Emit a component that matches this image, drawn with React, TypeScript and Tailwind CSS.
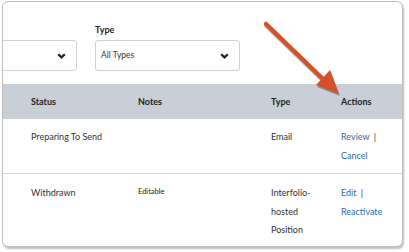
import React from 'react';

const Chevron: React.FC = () => (
    <svg width="9" height="6" viewBox="0 0 9 6" className="shrink-0">
        <path d="M1.2 1.2 L4.5 4.4 L7.8 1.2" fill="none" stroke="#222" strokeWidth="2.2" />
    </svg>
);

const Link: React.FC<{ children: React.ReactNode }> = ({ children }) => (
    <span className="text-[#2b6ca3]">{children}</span>
);

const App: React.FC = () => {
    return (
        <div className="w-[409px] h-[252px] bg-white overflow-hidden" style={{ fontFamily: 'Lato, "Open Sans", sans-serif' }}>
            <div className="relative ml-[2px] mt-[1px] w-[401px] h-[246px] rounded-[6px] border border-[#bdbdbd] bg-white overflow-hidden shadow-[1px_2px_2px_rgba(0,0,0,0.25)] text-[9px] text-[#333]">
                {/* Filters */}
                <div className="flex items-end gap-[18px] pt-[20px] h-[82px]">
                    <div className="ml-[-40px] w-[114px] h-[31px] mb-[13px] border border-[#d0d0d0] rounded-[3px] flex items-center justify-end pr-[10px]">
                        <Chevron />
                    </div>
                    <div className="flex flex-col mb-[13px]">
                        <label className="font-bold text-[#222] leading-[14px] mb-[3px]">Type</label>
                        <div className="w-[145px] h-[31px] border border-[#d0d0d0] rounded-[3px] flex items-center justify-between pl-[5px] pr-[10px]">
                            <span className="text-[8.5px]">All Types</span>
                            <Chevron />
                        </div>
                    </div>
                </div>

                {/* Header */}
                <div className="grid grid-cols-[107px_133px_70px_1fr] pl-[28px] h-[35px] items-center bg-[#c9cfd7] font-bold text-[#222]">
                    <div>Status</div>
                    <div>Notes</div>
                    <div>Type</div>
                    <div>Actions</div>
                </div>

                {/* Row 1 */}
                <div className="grid grid-cols-[107px_133px_70px_1fr] pl-[28px] pt-[9px] h-[55px] leading-[18.5px] border-b border-[#cfd4da]">
                    <div>Preparing To Send</div>
                    <div></div>
                    <div>Email</div>
                    <div>
                        <div><Link>Review</Link> <span className="ml-[2px]">|</span></div>
                        <div><Link>Cancel</Link></div>
                    </div>
                </div>

                {/* Row 2 */}
                <div className="grid grid-cols-[107px_133px_70px_1fr] pl-[28px] pt-[10px] leading-[18.5px]">
                    <div>Withdrawn</div>
                    <div className="text-[7.5px] text-[#222] leading-[12px] mt-[2px]">Editable</div>
                    <div>Interfolio-<br />hosted<br />Position</div>
                    <div>
                        <div><Link>Edit</Link> <span className="ml-[2px]">|</span></div>
                        <div><Link>Reactivate</Link></div>
                    </div>
                </div>

                {/* Annotation arrow */}
                <svg className="absolute left-0 top-0 pointer-events-none" width="401" height="246" viewBox="0 0 401 246">
                    <g transform="translate(-2,-1)">
                        <g opacity="0.3" transform="translate(1,2)">
                            <line x1="265" y1="23" x2="322" y2="78" stroke="#000" strokeWidth="5" strokeLinecap="round" />
                            <polygon points="315,84 329,69 338,93" fill="#000" />
                        </g>
                        <line x1="265" y1="23" x2="322" y2="78" stroke="#d5512a" strokeWidth="4.5" strokeLinecap="round" />
                        <polygon points="315,84 329,69 338,93" fill="#d5512a" />
                    </g>
                </svg>
            </div>
        </div>
    );
};

export default App;
